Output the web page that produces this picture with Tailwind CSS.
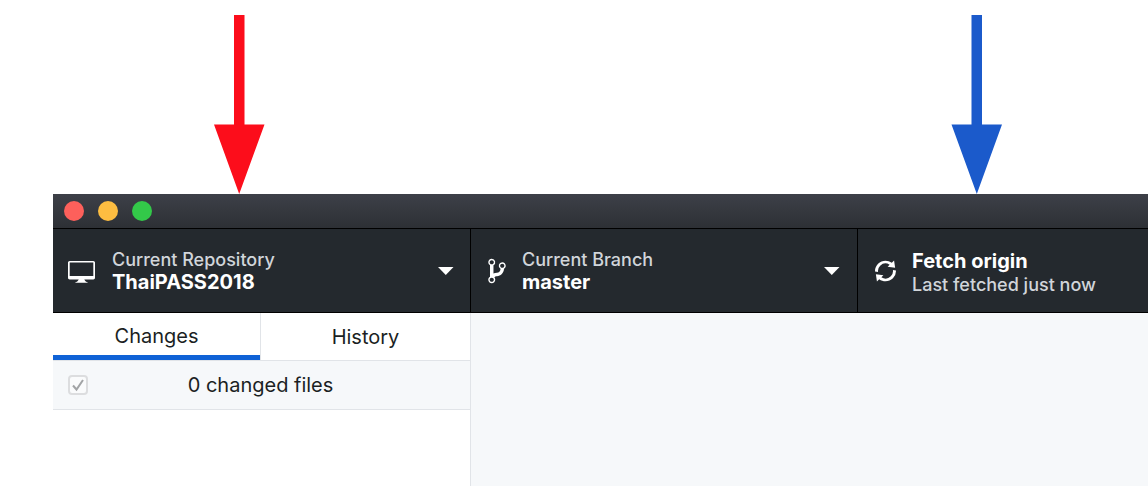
<!DOCTYPE html>
<html lang="en">
<head>
<meta charset="utf-8">
<meta name="viewport" content="width=device-width, initial-scale=1">
<title>ThaiPASS2018</title>
<script src="https://cdn.jsdelivr.net/npm/@tailwindcss/browser@4"></script>
</head>
<body class="relative flex min-h-screen flex-col overflow-x-hidden bg-white pt-[194px] pl-[53px] font-['Inter','Liberation_Sans',sans-serif] text-[#1b1f23]">
  <!-- Callout arrows over the page -->
  <svg class="absolute top-[15px] left-[214px] h-[179px] w-[51px]" viewBox="0 0 51 179" fill="#fc0d1b" aria-hidden="true"><path d="M20 0h10.500v109.500H50.500L25.200 179 0 109.500H20z"/></svg>
  <svg class="absolute top-[15px] left-[951px] h-[179px] w-[51px]" viewBox="0 0 51 179" fill="#1b5acb" aria-hidden="true"><path d="M20.500 0H31v109.500H51L25.800 179 .5 109.500h20z"/></svg>

  <div class="flex grow flex-col">
    <div class="flex h-[35px] items-center gap-[14px] border-b border-black bg-linear-to-b from-[#3d4048] to-[#2d3035] pl-[11px]">
      <button class="size-5 rounded-full bg-[#fd605b]" aria-label="Close"></button>
      <button class="size-5 rounded-full bg-[#fdbd41]" aria-label="Minimize"></button>
      <button class="size-5 rounded-full bg-[#33c949]" aria-label="Zoom"></button>
    </div>

    <header class="grid h-[84px] grid-cols-[418px_387px_1fr] border-b border-black bg-[#24292e] text-lg leading-[23px] text-white">
      <button class="flex items-center border-r border-black pr-4 pl-[15px] text-left">
        <svg class="mr-[17px] h-7 w-[27px] shrink-0" viewBox="0 0 16 16" fill="currentColor" aria-hidden="true"><path d="M15 2H1c-.55 0-1 .45-1 1v9c0 .55.45 1 1 1h5.340c-.25.61-.86 1.390-2.340 2h8c-1.480-.61-2.090-1.390-2.340-2H15c.55 0 1-.45 1-1V3c0-.55-.45-1-1-1zm0 9H1V3h14v8z"/></svg>
        <span class="grow"><span class="block font-medium text-[#d1d5da]">Current Repository</span><span class="block text-[20px] leading-[23px] font-bold">ThaiPASS2018</span></span>
        <svg class="h-2 w-4" viewBox="0 0 16 8" fill="currentColor" aria-hidden="true"><path d="M0 0h15.500L7.750 8z"/></svg>
      </button>
      <button class="flex items-center border-r border-black pr-[17px] pl-[17px] text-left">
        <svg class="mr-4 h-7 w-[18px] shrink-0" viewBox="0 0 10 16" fill="currentColor" aria-hidden="true"><path d="M10 5c0-1.110-.89-2-2-2a1.993 1.993 0 0 0-1 3.720v.3c-.02.52-.23.98-.63 1.380-.4.4-.86.61-1.380.63-.83.02-1.480.16-2 .45V4.720a1.993 1.993 0 0 0-1-3.720C.88 1 0 1.890 0 3a2 2 0 0 0 1 1.720v6.560c-.59.35-1 .99-1 1.720 0 1.110.89 2 2 2 1.110 0 2-.89 2-2 0-.53-.2-1-.53-1.360.09-.06.48-.41.59-.47.25-.11.56-.17.94-.17 1.050-.05 1.950-.45 2.750-1.250S8.950 7.770 9 6.730h-.02C9.590 6.370 10 5.730 10 5zM2 1.800c.66 0 1.200.55 1.200 1.200 0 .65-.55 1.200-1.200 1.200C1.350 4.200.8 3.650.8 3c0-.65.55-1.200 1.200-1.200zm0 12.410c-.66 0-1.200-.55-1.200-1.200 0-.65.55-1.200 1.200-1.200.65 0 1.200.55 1.200 1.200 0 .65-.55 1.200-1.200 1.200zm6-8c-.66 0-1.200-.55-1.200-1.200 0-.65.55-1.200 1.200-1.200.65 0 1.200.55 1.200 1.200 0 .65-.55 1.200-1.200 1.200z"/></svg>
        <span class="grow"><span class="block font-medium text-[#d1d5da]">Current Branch</span><span class="block text-[20px] leading-[23px] font-bold">master</span></span>
        <svg class="h-2 w-4" viewBox="0 0 16 8" fill="currentColor" aria-hidden="true"><path d="M0 0h15.500L7.750 8z"/></svg>
      </button>
      <button class="flex items-center pl-[17px] text-left">
        <svg class="mr-4 h-7 w-[21px] shrink-0" viewBox="0 0 12 16" fill="currentColor" aria-hidden="true"><path d="M10.240 7.400a4.150 4.150 0 0 1-1.200 3.600 4.346 4.346 0 0 1-5.410.54L4.800 10.400.5 9.800l.6 4.200 1.310-1.260c2.360 1.740 5.700 1.570 7.840-.54a5.876 5.876 0 0 0 1.740-4.460l-1.750-.34zM2.960 5a4.346 4.346 0 0 1 5.410-.54L7.200 5.600l4.300.6-.6-4.200-1.310 1.260c-2.360-1.740-5.700-1.570-7.850.54C.5 5.030-.06 6.650.01 8.260l1.750.35A4.170 4.170 0 0 1 2.960 5z"/></svg>
        <span class="pt-1"><span class="block text-[20px] leading-[23px] font-bold">Fetch origin</span><span class="block font-medium text-[#d1d5da]">Last fetched just now</span></span>
      </button>
    </header>

    <div class="flex grow">
      <aside class="w-[418px] shrink-0 border-r border-[#e1e4e8] bg-white text-xl">
        <div class="grid h-12 grid-cols-[207px_1fr] border-b border-[#e1e4e8]" role="tablist">
          <button class="border-b-5 border-[#0f62d6] pt-1" role="tab" aria-selected="true">Changes</button>
          <button class="border-l border-[#e1e4e8]" role="tab" aria-selected="false">History</button>
        </div>
        <label class="relative flex h-[49px] items-center justify-center border-b border-[#e1e4e8] bg-[#f6f8fa] pr-0.5">
          <input type="checkbox" checked class="absolute left-[15px] size-5 appearance-none rounded border-2 border-[#dcdddf] bg-[#fafbfc]">
          <svg class="pointer-events-none absolute left-[15px] size-5" viewBox="0 0 20 20" fill="none" stroke="#a2a4a6" stroke-width="2" aria-hidden="true"><path d="M5 10.500l3.500 4L15 5"/></svg>
          0 changed files
        </label>
      </aside>
      <main class="grow bg-[#f6f8fa]"></main>
    </div>
  </div>
</body>
</html>
